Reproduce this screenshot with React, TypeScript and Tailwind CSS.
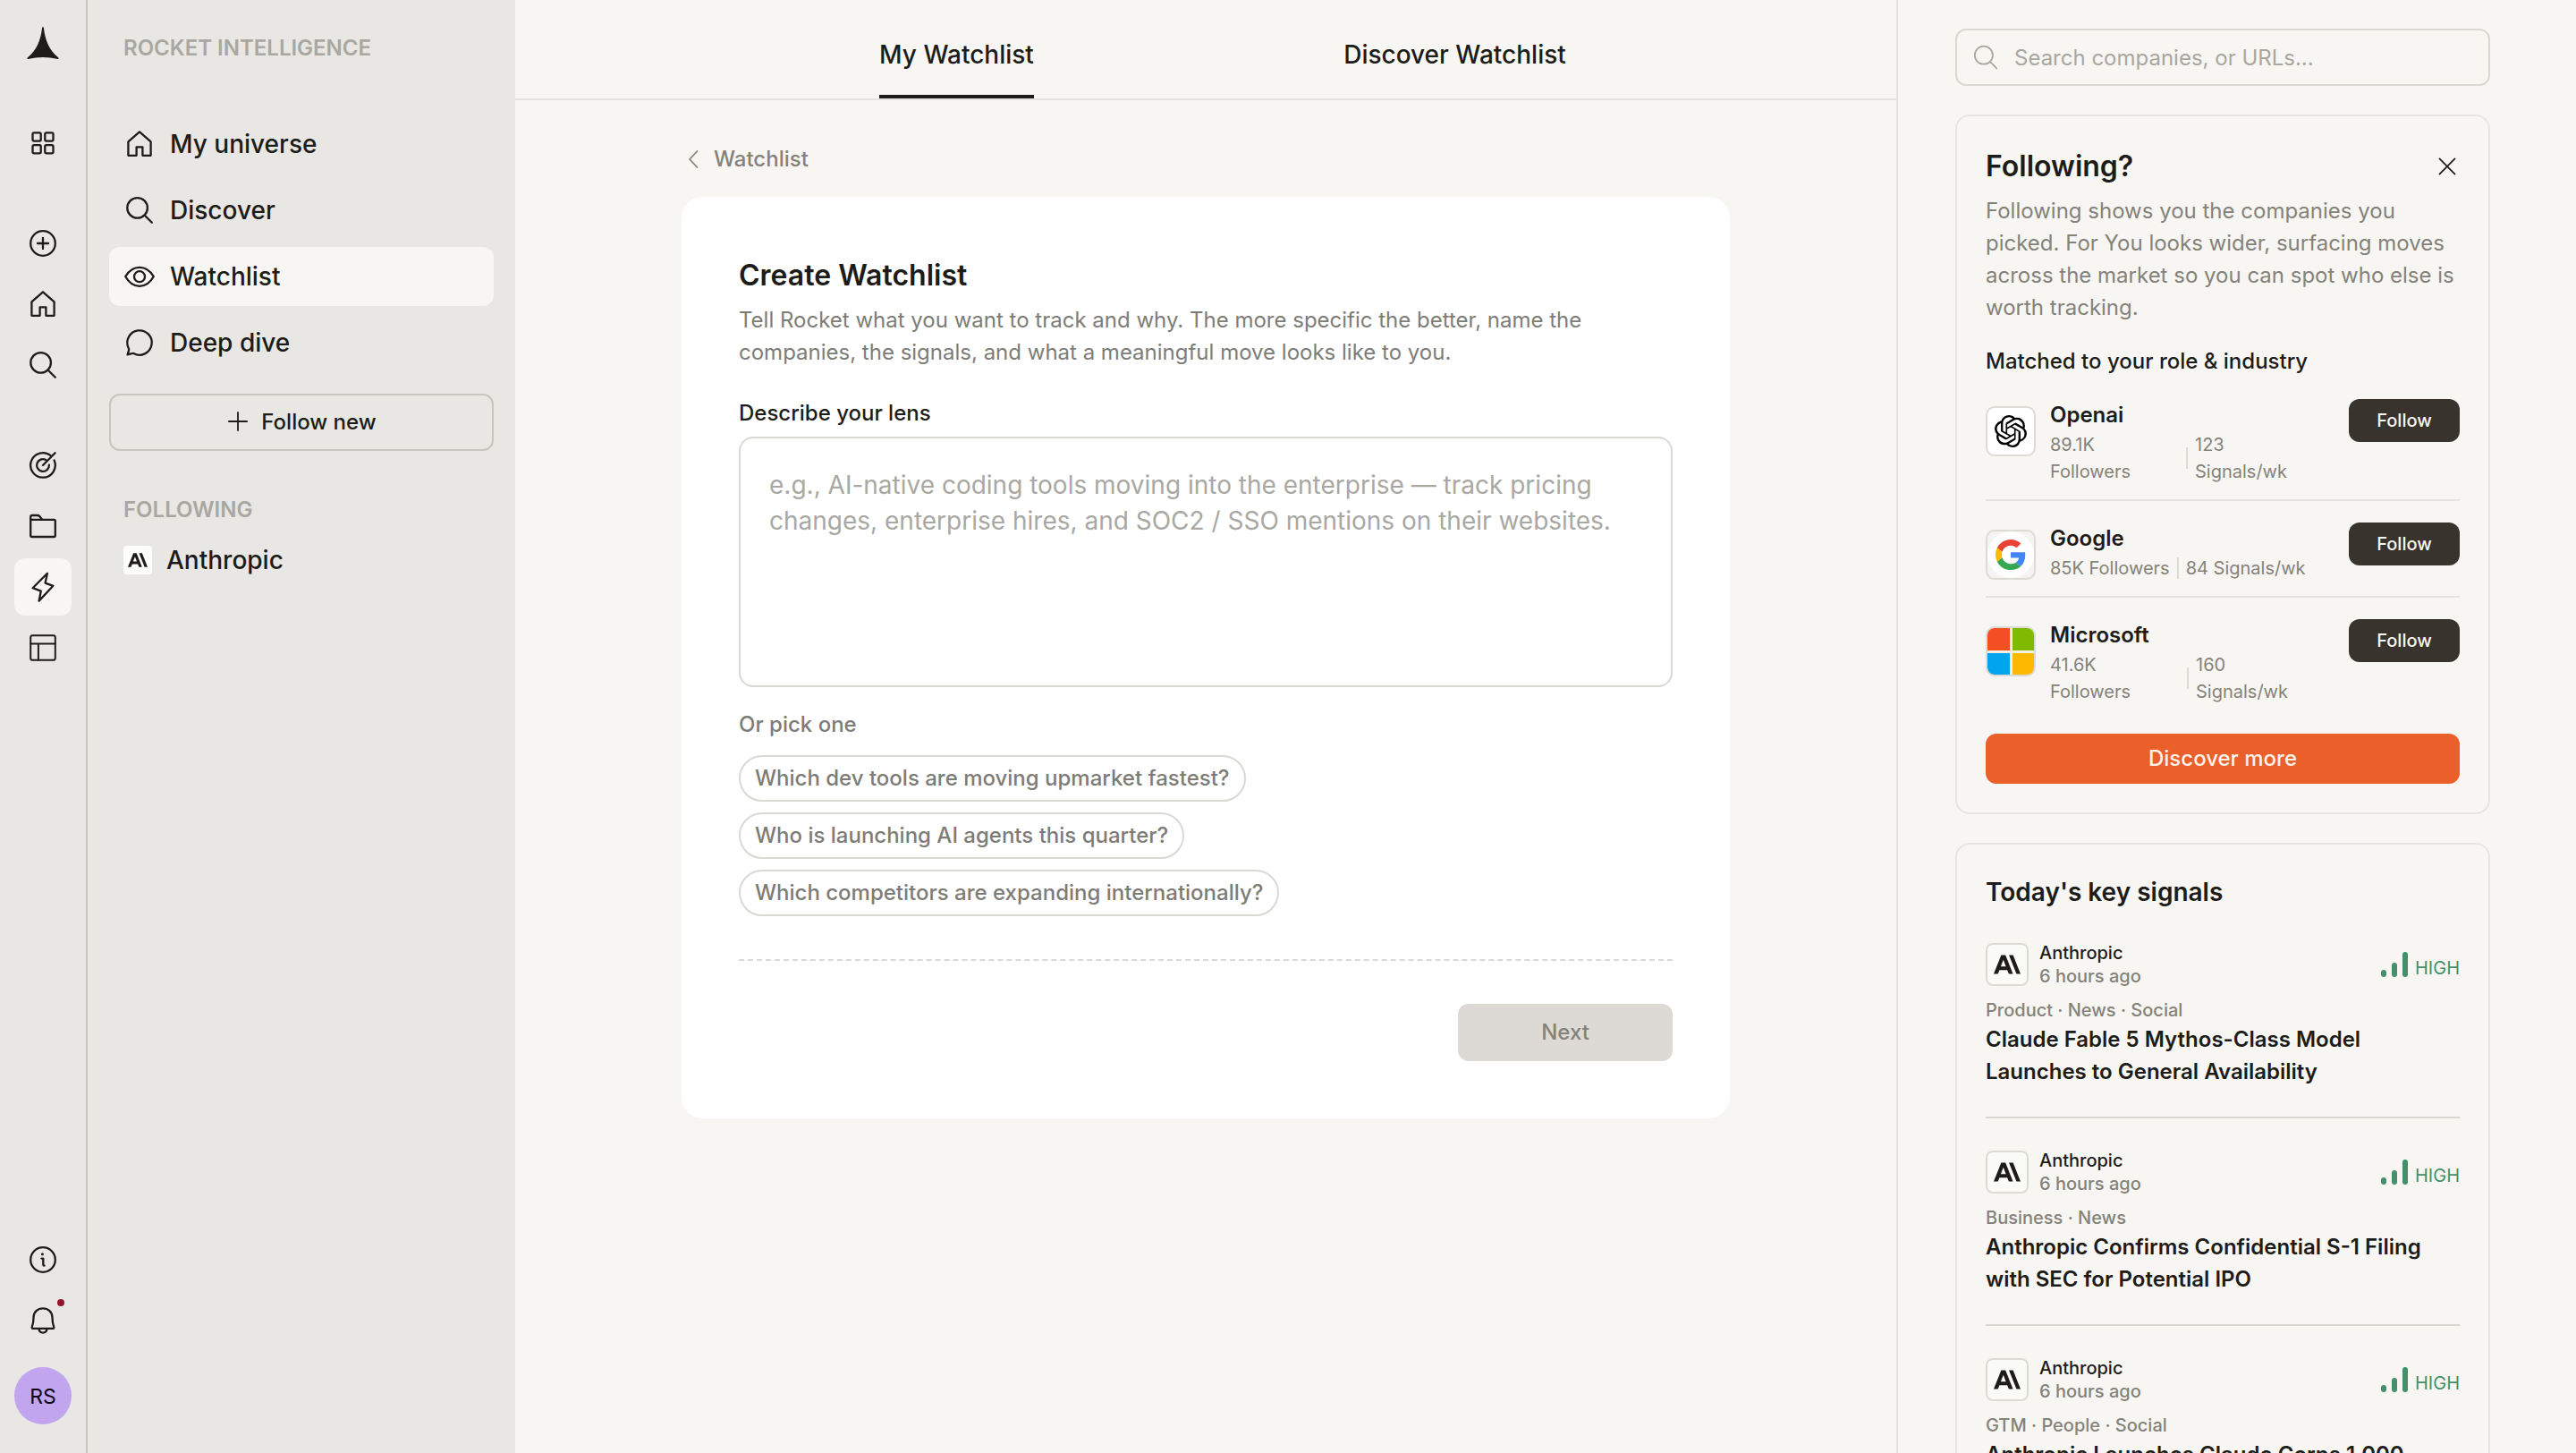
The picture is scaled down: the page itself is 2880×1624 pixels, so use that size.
import React from "react";
import { SiAnthropic, SiOpenai } from "react-icons/si";

type IconProps = { className?: string; sw?: number; children?: React.ReactNode };

function Icon({ className = "size-9", sw = 2.3, children }: IconProps) {
  return (
    <svg
      viewBox="-18 -18 36 36"
      className={`shrink-0 ${className}`}
      fill="none"
      stroke="currentColor"
      strokeWidth={sw}
      strokeLinecap="round"
      strokeLinejoin="round"
    >
      {children}
    </svg>
  );
}

const GridIcon = () => (
  <Icon sw={2.3}>
    <rect x="-11.5" y="-11.6" width="9.2" height="9.2" rx="1.6" />
    <rect x="2.3" y="-11.6" width="9.2" height="9.2" rx="1.6" />
    <rect x="-11.5" y="2.2" width="9.2" height="9.2" rx="1.6" />
    <rect x="2.3" y="2.2" width="9.2" height="9.2" rx="1.6" />
  </Icon>
);
const PlusCircleIcon = () => (
  <Icon>
    <circle r="13.8" />
    <path d="M0-6V6M-6 0H6" />
  </Icon>
);
const HomeIcon = () => (
  <Icon>
    <path d="M0-13.6L12.6-2.6V12.8H3.4V3.4H-3.4V12.8H-12.6V-2.6Z" />
  </Icon>
);
const SearchIcon = ({ className, sw }: IconProps) => (
  <Icon className={className} sw={sw}>
    <circle cx="-2.4" cy="-2.6" r="11.3" />
    <path d="M5.8 5.8L13.8 13.8" />
  </Icon>
);
const TargetIcon = () => (
  <Icon>
    <path d="M9-10.5A13.8 13.8 0 1 0 12.6-5.6" />
    <path d="M3.2-6.1A6.9 6.9 0 1 0 6.9-.3" />
    <path d="M0 0L13.6-13.8" />
  </Icon>
);
const FolderIcon = () => (
  <Icon>
    <path d="M-13.8-6.8V-10.2Q-13.8-12-12-12H-6Q-4.6-12-3.8-11L-.8-7.2H12.4Q13.8-7.2 13.8-5.8V10.6Q13.8 12 12.4 12H-12.4Q-13.8 12-13.8 10.6V-7.2H-.8" />
  </Icon>
);
const BoltIcon = () => (
  <Icon>
    <path d="M4.9-15.2L-11.4 1.2L-2.2 4.6L-4.4 15.6L11.4-1.2L2.6-4.4Z" />
  </Icon>
);
const LayoutIcon = () => (
  <Icon sw={2}>
    <rect x="-13.8" y="-13.8" width="27.6" height="27.6" rx="2.4" />
    <path d="M-13.8-4.6H13.8M-5.1-4.6V13.8" />
  </Icon>
);
const InfoIcon = () => (
  <Icon>
    <circle r="13.8" />
    <path d="M-1.6-1.4H.3V5.4Q.3 6.6 1.6 6.6" />
    <circle cx="-.6" cy="-6.3" r="1.5" fill="currentColor" stroke="none" />
  </Icon>
);
const BellIcon = () => (
  <Icon>
    <path d="M-10.5-3.4C-10.5-9.6-5.8-13.6 0-13.6S10.5-9.6 10.5-3.4C10.5 1.6 11 4 12.2 7.2Q12.6 8.8 11.4 8.8H-11.4Q-12.6 8.8-12.2 7.2C-11 4-10.5 1.6-10.5-3.4Z" />
    <path d="M-4.6 9.2C-4.2 12-2.4 13.6 0 13.6S4.2 12 4.6 9.2" />
  </Icon>
);
const EyeIcon = () => (
  <Icon>
    <path d="M-15.8 0C-12-6.4-6.4-10.2 0-10.2S12-6.4 15.8 0C12 6.8 6.4 10.8 0 10.8S-12 6.8-15.8 0Z" />
    <circle r="6" cy=".2" />
  </Icon>
);
const ChatIcon = () => (
  <Icon>
    <path d="M-12.4 5.8A13.7 13.7 0 1 1-6.6 12Q-7.6 11.7-8.8 12.2L-13.4 13.4L-12 8.6Q-11.6 7.2-12.4 5.8Z" />
  </Icon>
);

function RailItem({ active, children }: { active?: boolean; children: React.ReactNode }) {
  return (
    <div className={`relative flex size-16 items-center justify-center rounded-xl ${active ? "bg-[#f7f6f2]" : ""}`}>
      {children}
    </div>
  );
}

function Rail() {
  return (
    <nav className="flex w-[98px] shrink-0 flex-col items-center border-r-2 border-[#c7c5c0] bg-[#e8e7e3] pb-8 pt-4">
      <div className="flex size-16 items-center justify-center">
        <svg viewBox="0 0 36 36" className="size-9" fill="#1d1c19">
          <path d="M18 0C18.7 0 18.9 1 19.1 2.4C20.4 14 24.6 25.4 34.8 34C36.2 35.4 35.8 36.3 34.4 35.9C24 33.2 12 33.2 1.6 35.9C.2 36.3-.2 35.4 1.2 34C11.4 25.4 15.6 14 16.9 2.4C17.1 1 17.3 0 18 0Z" />
        </svg>
      </div>
      <div className="mt-12">
        <RailItem><GridIcon /></RailItem>
      </div>
      <div className="mt-12 flex flex-col gap-1">
        <RailItem><PlusCircleIcon /></RailItem>
        <RailItem><HomeIcon /></RailItem>
        <RailItem><SearchIcon /></RailItem>
      </div>
      <div className="mt-12 flex flex-col gap-1">
        <RailItem><TargetIcon /></RailItem>
        <RailItem><FolderIcon /></RailItem>
        <RailItem active><BoltIcon /></RailItem>
        <RailItem><LayoutIcon /></RailItem>
      </div>
      <div className="mt-auto flex flex-col gap-1">
        <RailItem><InfoIcon /></RailItem>
        <RailItem>
          <BellIcon />
          <span className="absolute right-2 top-2 size-2 rounded-full bg-[#96132a]" />
        </RailItem>
      </div>
      <div className="mt-5 flex size-16 items-center justify-center rounded-full bg-[#c1a5ef] pt-0.5 text-[23px] text-[#0d0614]">RS</div>
    </nav>
  );
}

const navItems = [
  { label: "My universe", icon: <HomeIcon /> },
  { label: "Discover", icon: <SearchIcon /> },
  { label: "Watchlist", icon: <EyeIcon />, active: true },
  { label: "Deep dive", icon: <ChatIcon /> },
];

function Sidebar() {
  return (
    <aside className="flex w-[478px] shrink-0 flex-col bg-[#e8e7e3] px-6 pt-9">
      <h2 className="px-4 text-2xl leading-9 font-semibold text-[#a9a7a0]">ROCKET INTELLIGENCE</h2>
      <ul className="mt-14 flex flex-col gap-2">
        {navItems.map((n) => (
          <li
            key={n.label}
            className={`flex h-[66px] items-center gap-4 rounded-xl px-4 text-[28px] font-medium ${n.active ? "bg-[#f7f6f2]" : ""}`}
          >
            {n.icon}
            <span>{n.label}</span>
          </li>
        ))}
      </ul>
      <button className="mt-6 flex h-16 items-center justify-center gap-[13px] rounded-xl border-2 border-[#c7c5c0] text-2xl font-medium">
        <Icon className="mb-[3px] size-[26px]" sw={2.5}>
          <path d="M0-14V14M-14 0H14" />
        </Icon>
        Follow new
      </button>
      <h3 className="mt-12 px-4 text-2xl leading-9 font-semibold text-[#a9a7a0]">FOLLOWING</h3>
      <div className="mt-5 flex items-center gap-4 px-4 text-[28px] leading-[36px] font-medium">
        <span className="flex size-8 items-center justify-center rounded bg-[#fdfdfa]">
          <SiAnthropic className="size-[22px]" />
        </span>
        Anthropic
      </div>
    </aside>
  );
}

const prompts = [
  "Which dev tools are moving upmarket fastest?",
  "Who is launching AI agents this quarter?",
  "Which competitors are expanding internationally?",
];

function Main() {
  return (
    <main className="flex w-[1544px] shrink-0 flex-col">
      <header className="flex h-28 shrink-0 justify-center border-b-2 border-[#e5e3df] text-[28px] font-medium">
        <div className="flex w-[1114px]">
          <div className="flex flex-1 justify-center">
            <span className="flex h-[110px] items-center border-b-4 border-[#1d1c19] pt-4">My Watchlist</span>
          </div>
          <div className="flex flex-1 justify-center">
            <span className="flex h-[110px] items-center border-b-4 border-transparent pt-4">Discover Watchlist</span>
          </div>
        </div>
      </header>
      <div className="ml-[186px] w-[1172px]">
        <div className="mt-12 flex h-9 items-center gap-2.5 text-2xl font-medium text-[#85827a]">
          <svg
            viewBox="0 0 26 26"
            className="size-[26px]"
            fill="none"
            stroke="currentColor"
            strokeWidth="1.8"
            strokeLinecap="round"
            strokeLinejoin="round"
          >
            <path d="M17.5 4L9 13L17.5 22" />
          </svg>
          Watchlist
        </div>
        <section className="mt-6 h-[1030px] rounded-3xl bg-white p-16">
          <h1 className="text-[32px] leading-[48px] font-semibold">Create Watchlist</h1>
          <p className="mt-2 text-2xl leading-9 text-[#7e7c77]">
            Tell Rocket what you want to track and why. The more specific the better, name the
            <br />
            companies, the signals, and what a meaningful move looks like to you.
          </p>
          <div className="mt-8 text-2xl leading-9 font-medium">Describe your lens</div>
          <div className="mt-2 h-[280px] rounded-2xl border-2 border-[#d9d8d4] p-8 text-[28px] leading-10 text-[#a9a8a3]">
            e.g., AI-native coding tools moving into the enterprise — track pricing
            <br />
            changes, enterprise hires, and SOC2 / SSO mentions on their websites.
          </div>
          <div className="mt-6 text-2xl leading-9 font-medium text-[#7e7c77]">Or pick one</div>
          <div className="mt-4 flex flex-col items-start gap-3">
            {prompts.map((p) => (
              <button
                key={p}
                className="h-[52px] rounded-full border-2 border-[#d9d8d4] px-4 text-2xl font-medium text-[#7e7c77]"
              >
                {p}
              </button>
            ))}
          </div>
          <div className="mt-12 border-t-2 border-dashed border-[#d9d8d4]" />
          <div className="mt-12 flex justify-end">
            <button className="h-16 w-60 rounded-xl bg-[#dddad5] text-2xl font-medium text-[#85827a]">Next</button>
          </div>
        </section>
      </div>
    </main>
  );
}

function GoogleG() {
  return (
    <svg viewBox="0 0 48 48" className="size-[34px]">
      <path fill="#EA4335" d="M24 9.5c3.54 0 6.71 1.22 9.21 3.6l6.85-6.85C35.9 2.38 30.47 0 24 0 14.62 0 6.51 5.38 2.56 13.22l7.98 6.19C12.43 13.72 17.74 9.5 24 9.5z" />
      <path fill="#4285F4" d="M46.98 24.55c0-1.57-.15-3.09-.38-4.55H24v9.02h12.94c-.58 2.96-2.26 5.48-4.78 7.18l7.73 6c4.51-4.18 7.09-10.36 7.09-17.65z" />
      <path fill="#FBBC05" d="M10.53 28.59c-.48-1.45-.76-2.99-.76-4.59s.27-3.14.76-4.59l-7.98-6.19C.92 16.46 0 20.12 0 24c0 3.88.92 7.54 2.56 10.78l7.97-6.19z" />
      <path fill="#34A853" d="M24 48c6.48 0 11.93-2.13 15.89-5.81l-7.73-6c-2.15 1.45-4.92 2.3-8.16 2.3-6.26 0-11.57-4.22-13.47-9.91l-7.98 6.19C6.51 42.62 14.62 48 24 48z" />
    </svg>
  );
}

function MicrosoftTiles() {
  return (
    <div className="grid size-full grid-cols-2 gap-[3px] bg-[#f3efe2]">
      <i className="bg-[#f25022]" />
      <i className="bg-[#7fba00]" />
      <i className="bg-[#00a4ef]" />
      <i className="bg-[#ffb900]" />
    </div>
  );
}

type Company = {
  name: string;
  followers: React.ReactNode;
  signals: React.ReactNode;
  width: string;
  logo: React.ReactNode;
  tile: string;
};

const companies: Company[] = [
  {
    name: "Openai",
    followers: <>89.1K<br />Followers</>,
    signals: <>123<br />Signals/wk</>,
    width: "w-36",
    logo: <SiOpenai className="size-9 text-black" />,
    tile: "bg-white",
  },
  {
    name: "Google",
    followers: "85K Followers",
    signals: "84 Signals/wk",
    width: "",
    logo: (
      <span className="flex size-[52px] items-center justify-center rounded-full bg-white">
        <GoogleG />
      </span>
    ),
    tile: "bg-[#f6f4f2]",
  },
  {
    name: "Microsoft",
    followers: <>41.6K<br />Followers</>,
    signals: <>160<br />Signals/wk</>,
    width: "w-[145px]",
    logo: <MicrosoftTiles />,
    tile: "",
  },
];

const signals = [
  { tags: "Product · News · Social", lines: ["Claude Fable 5 Mythos-Class Model", "Launches to General Availability"] },
  { tags: "Business · News", lines: ["Anthropic Confirms Confidential S-1 Filing", "with SEC for Potential IPO"] },
  { tags: "GTM · People · Social", lines: ["Anthropic Launches Claude Corps 1,000"] },
];

function Right() {
  return (
    <aside className="flex flex-1 flex-col border-l-2 border-[#e5e3df] pl-16 pr-24 pt-8">
      <div className="flex h-16 shrink-0 items-center gap-4 rounded-xl border-2 border-[#dad8d3] px-4 text-2xl text-[#a9a7a0]">
        <SearchIcon className="size-8" sw={2} />
        <span className="pt-px">Search companies, or URLs...</span>
      </div>

      <section className="mt-8 flex shrink-0 flex-col rounded-2xl border-2 border-[#e7e5e1] p-8">
        <div className="flex items-center justify-between">
          <h2 className="text-[32px] leading-[48px] font-semibold">Following?</h2>
          <Icon className="size-7" sw={2.2}>
            <path d="M-11-11L11 11M11-11L-11 11" />
          </Icon>
        </div>
        <p className="mt-2 text-2xl leading-9 text-[#85827a]">
          Following shows you the companies you
          <br />
          picked. For You looks wider, surfacing moves
          <br />
          across the market so you can spot who else is
          <br />
          worth tracking.
        </p>
        <h3 className="mt-6 text-2xl leading-9 font-medium">Matched to your role &amp; industry</h3>
        <div className="mt-6 flex flex-col">
          {companies.map((c, i) => (
            <div key={c.name} className={`flex items-start ${i > 0 ? "mt-4 border-t-2 border-[#e5e3df] pt-6" : ""}`}>
              <div className={`mt-2 flex size-14 shrink-0 items-center justify-center overflow-hidden rounded-[10px] border-2 border-[#dcdad5] ${c.tile}`}>
                {c.logo}
              </div>
              <div className="ml-4 flex-1">
                <div className="text-2xl leading-9 font-semibold">{c.name}</div>
                <div className="flex items-center gap-2 text-xl leading-[30px] whitespace-nowrap text-[#85827a]">
                  <span className={c.width}>{c.followers}</span>
                  <span className="h-6 w-0.5 bg-[#dcdad5]" />
                  <span>{c.signals}</span>
                </div>
              </div>
              <button className="h-12 w-[124px] shrink-0 rounded-xl bg-[#38332c] text-xl font-medium text-[#f7f6f2]">Follow</button>
            </div>
          ))}
        </div>
        <button className="mt-8 h-14 rounded-xl bg-[#eb602a] text-2xl font-medium text-[#fdf3ea]">Discover more</button>
      </section>

      <section className="mt-8 flex shrink-0 flex-col rounded-2xl border-2 border-[#e7e5e1] p-8">
        <h2 className="text-[28px] leading-[42px] font-semibold">Today&apos;s key signals</h2>
        {signals.map((s, i) => (
          <article key={s.tags} className={i > 0 ? "mt-8 border-t-2 border-[#d9d7d1] pt-[34px]" : "pt-[34px]"}>
            <div className="flex items-center">
              <div className="flex size-12 items-center justify-center rounded-lg border-2 border-[#dcdad5] bg-[#fafaf7]">
                <SiAnthropic className="size-[30px]" />
              </div>
              <div className="ml-3 text-xl leading-[26px] font-medium">
                <div>Anthropic</div>
                <div className="text-[#85827a]">6 hours ago</div>
              </div>
              <div className="ml-auto flex items-center gap-2 text-[#43906a]">
                <div className="flex items-end gap-1.5">
                  <i className="h-2 w-1.5 rounded-sm bg-current" />
                  <i className="h-4 w-1.5 rounded-sm bg-current" />
                  <i className="h-7 w-1.5 rounded-sm bg-current" />
                </div>
                <span className="mt-[7px] text-xl leading-7">HIGH</span>
              </div>
            </div>
            <div className="mt-2.5 text-xl leading-[30px] font-medium text-[#85827a]">{s.tags}</div>
            <div className="text-2xl leading-9 font-semibold">
              {s.lines.map((l) => (
                <div key={l}>{l}</div>
              ))}
            </div>
          </article>
        ))}
        <div className="h-20" />
      </section>
    </aside>
  );
}

export default function App() {
  return (
    <div className="flex h-[1624px] w-[2880px] overflow-hidden bg-[#f7f6f2] font-['Inter',sans-serif] text-[#1d1c19]">
      <Rail />
      <Sidebar />
      <Main />
      <Right />
    </div>
  );
}
